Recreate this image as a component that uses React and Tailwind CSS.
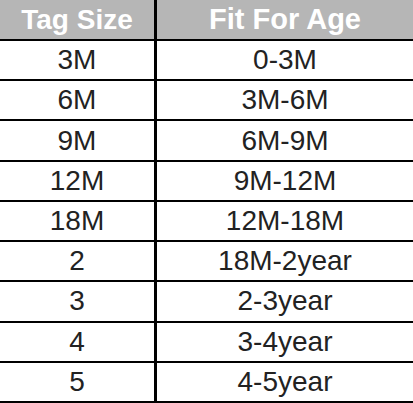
import React from 'react';

const rows = [
  ['3M', '0-3M'],
  ['6M', '3M-6M'],
  ['9M', '6M-9M'],
  ['12M', '9M-12M'],
  ['18M', '12M-18M'],
  ['2', '18M-2year'],
  ['3', '2-3year'],
  ['4', '3-4year'],
  ['5', '4-5year'],
];

export default function App() {
  return (
    <div className="w-[413px] h-[403px] bg-white flex flex-col overflow-hidden font-['Liberation_Sans',Arial,sans-serif]">
      {/* header */}
      <div className="h-[41px] shrink-0 flex bg-[#b6b6b6] border-b-2 border-black">
        <div className="w-[154px] flex items-center justify-center text-white font-bold text-[28px] leading-none">
          Tag Size
        </div>
        <div className="w-[3px] bg-black" />
        <div className="flex-1 flex items-center justify-center text-white font-bold text-[29px] leading-none">
          Fit For Age
        </div>
      </div>
      {rows.map(([size, age]) => (
        <div key={size} className="flex-1 flex border-b-2 border-black text-[#222] text-[28px] leading-none">
          <div className="w-[154px] flex items-center justify-center">{size}</div>
          <div className="w-[3px] bg-black" />
          <div className="flex-1 flex items-center justify-center">{age}</div>
        </div>
      ))}
    </div>
  );
}
